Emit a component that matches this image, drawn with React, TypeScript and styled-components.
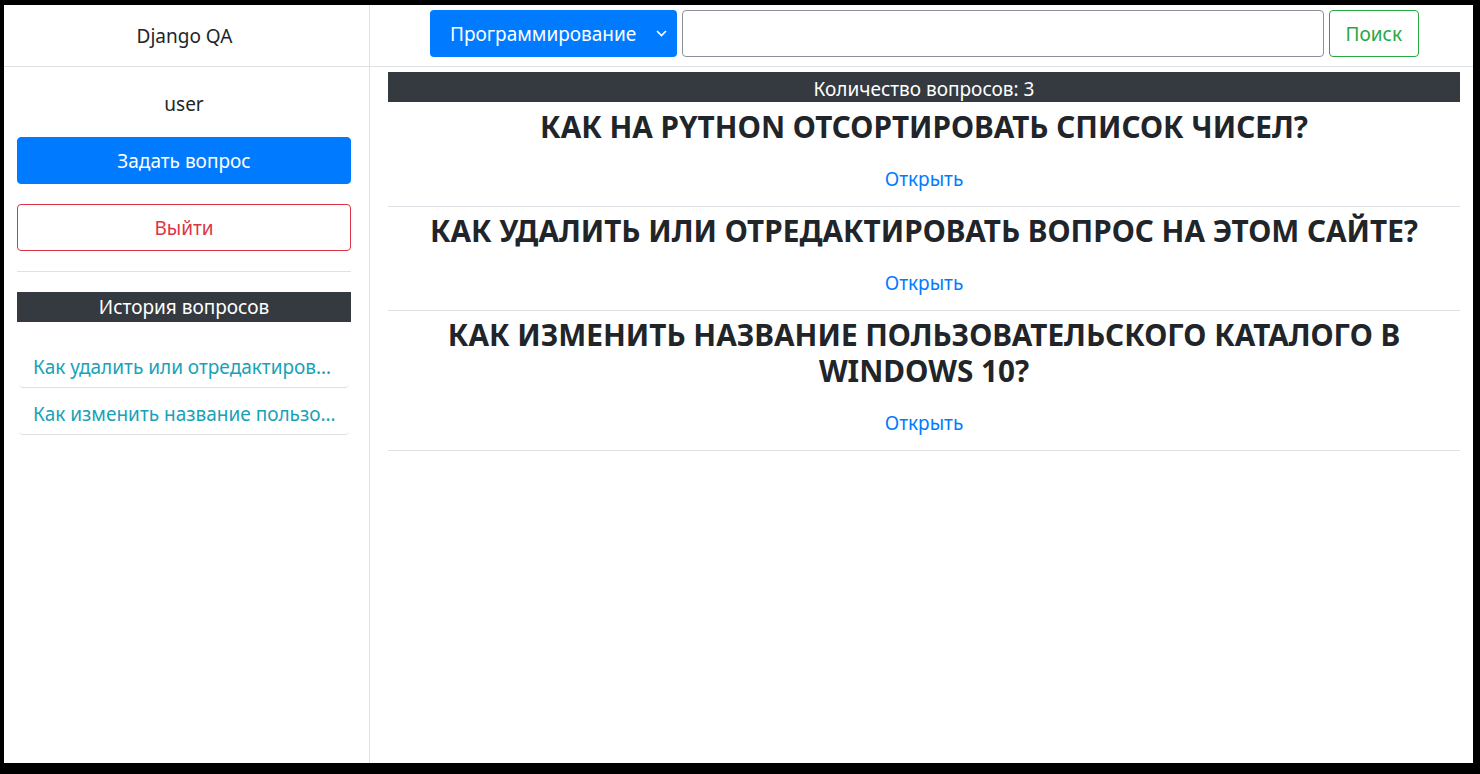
import React from 'react';
import styled, { createGlobalStyle } from 'styled-components';

const GlobalStyle = createGlobalStyle`
  html,
  body {
    margin: 0;
    background: #000;
  }

  body {
    font-family: "Noto Sans", "Open Sans", sans-serif;
    color: #212529;
  }

  * {
    box-sizing: border-box;
  }
`;

const Frame = styled.div`
  margin: 5px 7px 11px 4px;
  height: 758px;
  background: #fff;
  display: grid;
  grid-template-columns: 366px 1fr;
  grid-template-rows: 62px 1fr;
  overflow: hidden;
`;

const Brand = styled.div`
  display: flex;
  align-items: center;
  justify-content: center;
  padding-right: 4px;
  border-right: 1px solid #dee2e6;
  border-bottom: 1px solid #dee2e6;
  font-size: 19px;
  color: #212529;
`;

const SearchBar = styled.form`
  display: flex;
  align-items: flex-start;
  gap: 5px;
  padding: 5px 54px 0 60px;
  border-bottom: 1px solid #dee2e6;
  margin: 0;
`;

const SelectBox = styled.div`
  position: relative;
  width: 247px;
  height: 47px;
  background: #007bff;
  border-radius: 4px;
  color: #fff;
  font-size: 19px;
  display: flex;
  align-items: center;
  padding-left: 20px;

  svg {
    position: absolute;
    right: 10px;
    top: 20px;
  }
`;

const SearchInput = styled.input`
  flex: 1;
  height: 47px;
  border: 1px solid #8f8f9d;
  border-radius: 4px;
  font-size: 19px;
  padding: 0 12px;
  outline: none;
`;

const OutlineButton = styled.button<{ $color: string; $block?: boolean }>`
  height: 47px;
  padding: 0 16px;
  font-family: inherit;
  font-size: 19px;
  color: ${(p) => p.$color};
  background: #fff;
  border: 1px solid ${(p) => p.$color};
  border-radius: 4px;
  width: ${(p) => (p.$block ? '100%' : 'auto')};
`;

const SolidButton = styled.button`
  width: 100%;
  height: 47px;
  font-family: inherit;
  font-size: 19px;
  color: #fff;
  background: #007bff;
  border: 1px solid #007bff;
  border-radius: 4px;
`;

const Sidebar = styled.aside`
  border-right: 1px solid #dee2e6;
  padding: 23px 18px 0 13px;
  display: flex;
  flex-direction: column;
`;

const UserName = styled.div`
  text-align: center;
  font-size: 19px;
  line-height: 28px;
  margin-bottom: 19px;
`;

const Spacer = styled.div`
  height: 20px;
`;

const Divider = styled.hr`
  border: 0;
  border-top: 1px solid #dee2e6;
  margin: 20px 0;
  width: 100%;
`;

const DarkBar = styled.div<{ $size: number; $offset?: number }>`
  background: #343a40;
  color: #fff;
  text-align: center;
  height: 30px;
  overflow: hidden;
  font-size: ${(p) => p.$size}px;
  padding-top: ${(p) => p.$offset || 0}px;
  line-height: ${(p) => 30 - (p.$offset || 0)}px;
`;

const HistoryList = styled.ul`
  list-style: none;
  margin: 19px 2px 0 2px;
  padding: 0;
`;

const HistoryItem = styled.li`
  padding: 12px 4px 6px 14px;
  border-bottom: 1px solid #dee2e6;
  border-radius: 0 0 4px 4px;
  font-size: 19px;
  line-height: 28px;
  color: #17a2b8;
  white-space: nowrap;
  overflow: hidden;
  text-overflow: ellipsis;
`;

const Main = styled.main`
  padding: 5px 13px 0 18px;
`;

const QuestionList = styled.div`
  margin-top: 1px;
`;

const Question = styled.article`
  padding: 6px 0 13px;
  border-bottom: 1px solid #dee2e6;
  text-align: center;
`;

const QuestionTitle = styled.h3`
  margin: 0 0 20px;
  font-size: 29.7px;
  line-height: 36px;
  font-weight: 700;
  color: #212529;
`;

const OpenLink = styled.a`
  display: block;
  font-size: 19px;
  line-height: 28px;
  color: #007bff;
  text-decoration: none;
`;

const history = [
  'Как удалить или отредактиров…',
  'Как изменить название пользо…',
];

const questions = [
  'КАК НА PYTHON ОТСОРТИРОВАТЬ СПИСОК ЧИСЕЛ?',
  'КАК УДАЛИТЬ ИЛИ ОТРЕДАКТИРОВАТЬ ВОПРОС НА ЭТОМ САЙТЕ?',
  'КАК ИЗМЕНИТЬ НАЗВАНИЕ ПОЛЬЗОВАТЕЛЬСКОГО КАТАЛОГО В WINDOWS 10?',
];

const App = () => {
  return (
    <>
      <GlobalStyle />
      <Frame>
        <Brand>Django QA</Brand>
        <SearchBar onSubmit={(e) => e.preventDefault()}>
          <SelectBox>
            Программирование
            <svg width="11" height="7" viewBox="0 0 11 7" fill="none">
              <path d="M1 1l4.5 4.5L10 1" stroke="#fff" strokeWidth="1.6" />
            </svg>
          </SelectBox>
          <SearchInput type="text" />
          <OutlineButton $color="#28a745">Поиск</OutlineButton>
        </SearchBar>

        <Sidebar>
          <UserName>user</UserName>
          <SolidButton>Задать вопрос</SolidButton>
          <Spacer />
          <OutlineButton $color="#dc3545" $block>
            Выйти
          </OutlineButton>
          <Divider />
          <DarkBar $size={19}>История вопросов</DarkBar>
          <HistoryList>
            {history.map((item) => (
              <HistoryItem key={item}>{item}</HistoryItem>
            ))}
          </HistoryList>
        </Sidebar>

        <Main>
          <DarkBar $size={19} $offset={4}>
            Количество вопросов: 3
          </DarkBar>
          <QuestionList>
            {questions.map((q) => (
              <Question key={q}>
                <QuestionTitle>{q}</QuestionTitle>
                <OpenLink href="#">Открыть</OpenLink>
              </Question>
            ))}
          </QuestionList>
        </Main>
      </Frame>
    </>
  );
};

export default App;
